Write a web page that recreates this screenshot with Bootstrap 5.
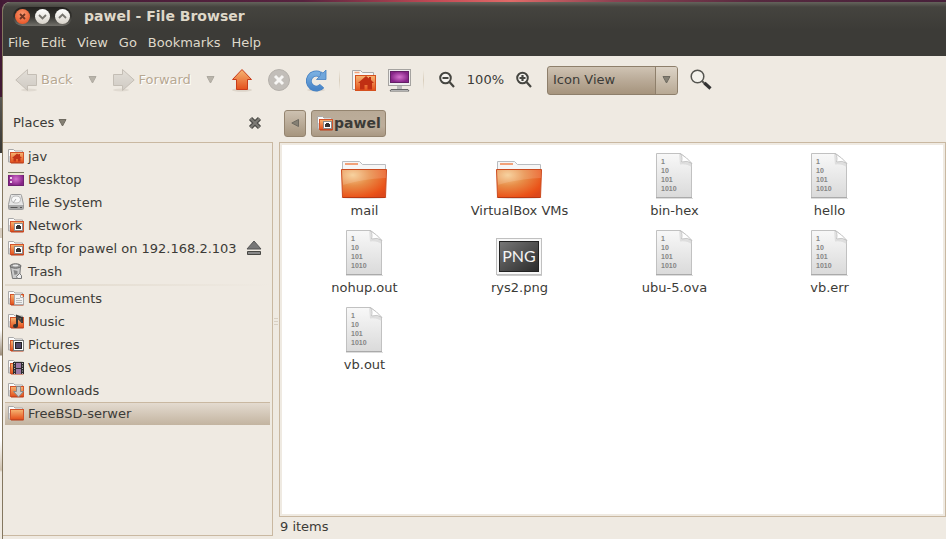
<!DOCTYPE html>
<html lang="en">
<head>
<meta charset="utf-8">
<meta name="viewport" content="width=device-width, initial-scale=1">
<title>pawel - File Browser</title>
<link href="https://cdn.jsdelivr.net/npm/bootstrap@5.3.0/dist/css/bootstrap.min.css" rel="stylesheet">
<style>
:root{--cream:#efeae2;--ink:#3c3b37;--line:#c9b8a1}
body{font:13px/18px "DejaVu Sans",sans-serif;color:var(--ink);background:#411934;overflow:hidden}
button{font:inherit;color:inherit;background:none;border:0;padding:0}
a{color:inherit;text-decoration:none}
svg{display:block;flex:none}
.desk{padding:2px 0 0 2px;background:
 linear-gradient(#411934 0 97px,#5a5853 97px,#393834 153px,#f7f6f3 153px 228px,#d8cfc2 228px 238px,#fff 238px 330px,#9c8e7c 355px,#fff 356px 440px,#cfc2b0 470px,#efeae2 472px) 0 0/2px 100% no-repeat,
 linear-gradient(90deg,#431a36,#57233f 32%,#c34a55 46%,#e06a68 54%,#8d4152 65%,#56293f 80%,#47203a)}
.win{border-left:1px solid #84775f;border-top-left-radius:8px;background:var(--cream);overflow:hidden}
.titlebar{height:28px;padding-left:10px;gap:12px;background:linear-gradient(#65635c,#45443f 5px,#3c3b37);color:#dfd8c9}
.titlebar h1{font-size:14px;line-height:18px;font-weight:bold}
.pill{height:19px;width:59px;border-radius:10px;gap:5px;background:linear-gradient(#23221f,#34332f 50%,#73716b);padding:0 2px}
.orb{width:15px;height:15px;border-radius:50%;background:linear-gradient(#fff,#d8d3ca)}
.orb.shut{background:radial-gradient(circle at 50% 35%,#f99a72,#ea5a2c 75%)}
.menus{height:26px;padding:0 5px;gap:11px;background:#3c3b37;color:#dfd8c9}
.menus a{height:24px;line-height:24px}
.tools{height:48px;padding-left:12px;gap:12px}
.off{color:#b7a892;text-shadow:1px 1px #fff}
.g1{margin-right:3px}.g2{margin-right:4px}
.rule{width:1px;height:20px;background:linear-gradient(transparent,#d8cdbb,transparent)}
.pick{width:131px;height:29px}
.pick select{appearance:none;width:100%;height:100%;font:inherit;color:var(--ink);padding:0 28px 0 5px;border:1px solid #8e7f6b;border-radius:3px;background:linear-gradient(#cfc3b3,#b9aa97 50%,#a6947d)}
.pick span{position:absolute;right:1px;top:1px;bottom:1px;width:22px;border-left:1px solid #8e7f6b;border-radius:0 2px 2px 0;background:linear-gradient(#dcd3c6,#b8a994);pointer-events:none}
.side{width:270px;padding-bottom:3px}
.head{height:38px}
.side .head{padding:0 11px 0 10px}
.path{padding-left:5px;gap:5px}
.frame{border:1px solid var(--line)}
.side .frame{border-left:0;padding:2px}
.place{height:23px;gap:4px;padding-left:3px;color:inherit}
.place svg{margin-bottom:2px}
.place.chosen{background:linear-gradient(#e4dbd0,#c3b4a0);border-top:1px solid var(--line)}
.side hr{margin:1px 0 1px;border:0;height:2px;opacity:1;background:linear-gradient(90deg,#e0d8cb,transparent)}
.split{width:6px}
.grip{width:4px;height:8px;background:repeating-linear-gradient(#d8cfc2 0 1px,transparent 1px 3px)}
.crumb{height:27px;border:1px solid #94846f;border-radius:3px;background:linear-gradient(#cdc1b1,#a6957e)}
.crumb.prev{width:22px}
.crumb.here{background:linear-gradient(#b9aa97,#bdae9b 60%,#a99883);font-size:14px;font-weight:bold;padding:0 4px 0 5px;gap:1px}
.view{padding:2px}
.icons{display:grid;grid-template-columns:repeat(auto-fill,155px);grid-auto-rows:69px;align-content:start;row-gap:8px;padding:6px 0 0 5px;background:#fff}
.doc{gap:3px}
.doc svg{margin-right:2px}
.status{height:19px;margin-bottom:3px;padding-left:1px}
</style>
<script src="https://cdn.jsdelivr.net/npm/bootstrap@5.3.0/dist/js/bootstrap.bundle.min.js"></script>
</head>
<body>
<svg width="0" height="0" class="position-absolute" aria-hidden="true">
<defs>
<linearGradient id="org" x1="0" y1="0" x2="0" y2="1"><stop offset="0" stop-color="#f6b674"/><stop offset="1" stop-color="#e4501b"/></linearGradient>
<radialGradient id="fold" cx=".25" cy=".2" r=".95"><stop offset="0" stop-color="#f6cb90"/><stop offset=".4" stop-color="#e88d48"/><stop offset=".85" stop-color="#ea5218"/><stop offset="1" stop-color="#dd481a"/></radialGradient>
<linearGradient id="gry" x1="0" y1="0" x2="0" y2="1"><stop offset="0" stop-color="#e3dfd8"/><stop offset="1" stop-color="#cfcac3"/></linearGradient>
<linearGradient id="pap" x1="0" y1="0" x2="0" y2="1"><stop offset="0" stop-color="#f8f8f8"/><stop offset="1" stop-color="#dadada"/></linearGradient>
<linearGradient id="drk" x1="0" y1="0" x2="1" y2="1"><stop offset="0" stop-color="#777"/><stop offset="1" stop-color="#292929"/></linearGradient>
<radialGradient id="pur"><stop offset="0" stop-color="#d673cf"/><stop offset="1" stop-color="#862487"/></radialGradient>
<linearGradient id="blu" x1="0" y1="0" x2="0" y2="1"><stop offset="0" stop-color="#78aee0"/><stop offset="1" stop-color="#4a86c8"/></linearGradient>
<symbol id="mini" viewBox="0 0 16 16"><path d="M.5 14V1.500h5L7 3h7.500v5H2v6z" fill="#fcfcfc" stroke="#a9a9a9"/><rect x="2.500" y="4.500" width="13" height="10" fill="url(#org)" stroke="#d3532a"/><path d="M3 15h12.500" stroke="#b83a17"/></symbol>
<symbol id="house" viewBox="0 0 16 16"><use href="#mini"/><path d="M9 5.500L4 10h1.500v3.500h2.500V11h2v2.500h2.500V10H14L12 8.200V6h-1.500v.8z" fill="#c1351a"/></symbol>
<symbol id="net" viewBox="0 0 16 16"><use href="#mini"/><rect x="6.500" y="6.500" width="8" height="7" fill="#fff" stroke="#8c8c8c"/><path d="M8 9h1V8h3v1h1v3H8z" fill="#333"/></symbol>
<symbol id="folder" viewBox="0 0 48 48"><ellipse cx="24" cy="46.500" rx="23" ry="1.500" fill="#ddd"/><path d="M2.500 20V10.500h17l3 3h23V20z" fill="#f6f6f6" stroke="#b9bcc0"/><path d="M5 13h13" stroke="#f2a178" stroke-width="2"/><path d="M1.500 18.500h45l-1 28h-43z" fill="url(#fold)" stroke="#cb4b20"/><path d="M2 19h44v8Q22 28 3 34z" fill="#fff" opacity=".14"/><path d="M3 46.500h42" stroke="#b83813"/></symbol>
<symbol id="binary" viewBox="0 0 48 48"><path d="M6 47.500h37" stroke="#ddd" stroke-width="1"/><path d="M6.500 2.500h24q6 4 11 10v34h-35z" fill="url(#pap)" stroke="#c1c1c1"/><path d="M6 46.500h36" stroke="#aaa"/><path d="M29 2.500q4 3 2 9 6-2 11 1v4q-5-4-12-3z" fill="#ccc" opacity=".5"/><path d="M30 2.500q3 3 1.500 8.500 6-2 10.500 1.500-5-6-12-10z" fill="#fff" stroke="#bbb" stroke-width=".8"/><g font-family="Liberation Sans,sans-serif" font-weight="bold" font-size="7" fill="#858585"><text x="11" y="13">1</text><text x="11" y="22">10</text><text x="11" y="31">101</text><text x="11" y="40">1010</text></g></symbol>
<symbol id="caret" viewBox="0 0 9 8"><path d="M1 .5h7L4.500 7z" fill="#858074" stroke="#6e6a60"/></symbol>
</defs></svg>
<div class="desk vh-100 d-flex flex-column">
<main class="win flex-grow-1 d-flex flex-column">
<header class="titlebar d-flex align-items-center">
<div class="pill d-flex align-items-center">
<button class="orb shut" aria-label="Close"><svg width="15" height="15"><path d="M5 5l5 5m0-5l-5 5" stroke="#713522" stroke-width="1.800"/></svg></button>
<button class="orb" aria-label="Minimize"><svg width="15" height="15"><path d="M4 6l3.500 3.500L11 6" fill="none" stroke="#77756f" stroke-width="1.800"/></svg></button>
<button class="orb" aria-label="Maximize"><svg width="15" height="15"><path d="M4 9l3.500-3.500L11 9" fill="none" stroke="#77756f" stroke-width="1.800"/></svg></button>
</div>
<h1 class="m-0">pawel - File Browser</h1>
</header>
<nav class="menus d-flex align-items-center" aria-label="Menu">
<a href="#">File</a><a href="#">Edit</a><a href="#">View</a><a href="#">Go</a><a href="#">Bookmarks</a><a href="#">Help</a>
</nav>
<div class="tools d-flex align-items-center flex-shrink-0" role="toolbar">
<button class="off g1 d-flex align-items-center gap-1" disabled><svg width="22" height="24"><ellipse cx="14" cy="22" rx="8" ry="1.500" fill="#e0dad1"/><path d="M.8 12L12.500 1.500v5h9v11h-9v5z" fill="url(#gry)" stroke="#c4beb5"/></svg>Back</button>
<button class="g2 opacity-50" aria-label="Back history" disabled><svg width="9" height="8"><use href="#caret"/></svg></button>
<button class="off g1 d-flex align-items-center gap-1" disabled><svg width="22" height="24"><ellipse cx="8" cy="22" rx="8" ry="1.500" fill="#e0dad1"/><path d="M21.200 12L9.500 1.500v5h-9v11h9v5z" fill="url(#gry)" stroke="#c4beb5"/></svg>Forward</button>
<button class="g2 opacity-50" aria-label="Forward history" disabled><svg width="9" height="8"><use href="#caret"/></svg></button>
<button class="g1" aria-label="Up"><svg width="22" height="24"><ellipse cx="11" cy="22" rx="10" ry="1.800" fill="#ddd5ca"/><path d="M11 1.500l9.500 10h-4v10h-11v-10h-4z" fill="url(#org)" stroke="#c93b19"/></svg></button>
<button class="g1" aria-label="Stop" disabled><svg width="22" height="24"><circle cx="11" cy="12" r="10.500" fill="#c2beb9" stroke="#b4b0aa"/><path d="M7 8l8 8m0-8l-8 8" stroke="#f7f6f4" stroke-width="3"/></svg></button>
<button aria-label="Reload"><svg width="22" height="24"><ellipse cx="11" cy="22" rx="9" ry="1.500" fill="#ddd5ca"/><path d="M15 6.500A7.500 7.500 0 1 0 17 18" fill="none" stroke="#4580c2" stroke-width="6"/><path d="M15 6.500A7.500 7.500 0 1 0 17 18" fill="none" stroke="url(#blu)" stroke-width="4.500"/><path d="M21 2v9.500h-9.500l3.500-3.500 1-4 2 1z" fill="#70a6db" stroke="#4580c2" stroke-width=".8"/></svg></button>
<span class="rule"></span>
<button aria-label="Home"><svg width="24" height="24"><path d="M.5 21.500v-19h8l2 2h11v6h-18v11z" fill="#f6f6f5" stroke="#aaa"/><path d="M2.500 4.500h5" stroke="#f2a178" stroke-width="1.500"/><rect x="3.500" y="7.500" width="20" height="15" fill="url(#org)" stroke="#d5501e"/><path d="M14 8l-8 7h2v6.500h4.500V17h3v4.500H20V15h2l-3-3V9h-2v1.500z" fill="#c02f13"/></svg></button>
<button aria-label="Computer"><svg width="23" height="24"><path d="M9 18h5v3H9z" fill="#bbb"/><rect x=".5" y="1.500" width="22" height="16" fill="#eee" stroke="#a5a3a0"/><rect x="2.500" y="3.500" width="18" height="11" fill="url(#pur)" stroke="#641f66"/><path d="M3 21.500h17l1 1.500H2z" fill="#fff" stroke="#666"/></svg></button>
<span class="rule g1"></span>
<button aria-label="Zoom out"><svg width="16" height="18"><circle cx="6.500" cy="7" r="5.300" fill="#f6f4f0" stroke="#464641" stroke-width="2"/><path d="M3.500 7h6M10.500 11l4.500 5" stroke="#464641" stroke-width="2.200"/></svg></button>
<span>100%</span>
<button class="g1" aria-label="Zoom in"><svg width="16" height="18"><circle cx="6.500" cy="7" r="5.300" fill="#f6f4f0" stroke="#464641" stroke-width="2"/><path d="M3.500 7h6m-3-3v6M10.500 11l4.500 5" stroke="#464641" stroke-width="2.200"/></svg></button>
<div class="pick position-relative"><select aria-label="View as"><option>Icon View</option><option>List View</option><option>Compact View</option></select><span class="d-flex align-items-center justify-content-center"><svg width="9" height="8"><use href="#caret"/></svg></span></div>
<button aria-label="Search"><svg width="22" height="22"><circle cx="7.500" cy="7.500" r="6.300" fill="#f4f2ec" stroke="#555550" stroke-width="1.500"/><path d="M12 12l4 4" stroke="#55544f" stroke-width="2"/><path d="M14.500 14l6 5.500" stroke="#333" stroke-width="3.200"/></svg></button>
</div>
<div class="d-flex flex-grow-1">
<aside class="side d-flex flex-column flex-shrink-0">
<div class="head d-flex align-items-center justify-content-between">
<button class="d-flex align-items-center gap-1">Places<svg width="9" height="8"><use href="#caret"/></svg></button>
<button aria-label="Close side pane"><svg width="14" height="14"><path d="M2.500 2.500l9 9m0-9l-9 9" stroke="#4c4b47" stroke-width="4.500"/><path d="M2.500 2.500l9 9m0-9l-9 9" stroke="#7d7b76" stroke-width="2"/></svg></button>
</div>
<nav class="frame flex-grow-1" aria-label="Places">
<a class="place d-flex align-items-center" href="#"><svg width="16" height="16"><use href="#house"/></svg>jav</a>
<a class="place d-flex align-items-center" href="#"><svg width="16" height="16"><rect x=".5" y="1.500" width="15" height="13" fill="url(#pur)" stroke="#6d2370"/><path d="M0 1.500h16" stroke="#74785f"/><path d="M0 3h16" stroke="#e6e6cf" stroke-width="2"/><path d="M2 6h2v2H2zm0 4h2v2H2z" fill="#f1d7ef"/></svg>Desktop</a>
<a class="place d-flex align-items-center" href="#"><svg width="16" height="16"><path d="M2.500 1.500q0-1 1-1h9q1 0 1 1l2 9v4q0 1-1 1h-13q-1 0-1-1v-4z" fill="#e5e5e5" stroke="#999"/><ellipse cx="8" cy="5.500" rx="4.500" ry="3.500" fill="#f8f8f8" stroke="#bbb"/><path d="M8 5l-3 4" stroke="#aaa"/><path d="M1 11h14v4H1z" fill="#aaa"/><path d="M2.500 13.500h7M12 13.500h2" stroke="#555"/></svg>File System</a>
<a class="place d-flex align-items-center" href="#"><svg width="16" height="16"><use href="#net"/></svg>Network</a>
<div class="place d-flex align-items-center"><a class="d-flex align-items-center gap-1 flex-grow-1" href="#"><svg width="16" height="16"><use href="#net"/></svg>sftp for pawel on 192.168.2.103</a><button class="me-2" aria-label="Eject"><svg width="16" height="16"><path d="M8 1l7 8H1z" fill="#777" stroke="#555"/><path d="M1.500 11.500h13v3h-13z" fill="#888" stroke="#484844"/></svg></button></div>
<a class="place d-flex align-items-center" href="#"><svg width="16" height="16"><path d="M2.500 3.500h10l-1 12h-7z" fill="#ccc" stroke="#777"/><ellipse cx="7.500" cy="3" rx="5.500" ry="2.200" fill="#999" stroke="#666"/><ellipse cx="7.500" cy="2.500" rx="3" ry="1" fill="#e8e8e8"/><path d="M5.500 7l4 1v3l-3 1z" fill="#888"/><path d="M8.500 13.500l3-3 2 2v3h-4z" fill="#eee" stroke="#777"/></svg>Trash</a>
<hr>
<a class="place d-flex align-items-center" href="#"><svg width="16" height="16"><use href="#mini"/><path d="M6.500 4.500h6l3 3v7h-9z" fill="#f1f1f1" stroke="#aaa"/><path d="M8 8.500h4m-4 2h6m-6 2h6" stroke="#bbb"/><path d="M12.500 4.500v3h3" fill="#fff" stroke="#aaa"/></svg>Documents</a>
<a class="place d-flex align-items-center" href="#"><svg width="16" height="16"><use href="#mini"/><path d="M9 13V3l5 2v5" fill="none" stroke="#333" stroke-width="2"/><path d="M9 4l5 5" stroke="#444" stroke-width="2"/><ellipse cx="7.500" cy="13" rx="2.500" ry="2" fill="#333"/></svg>Music</a>
<a class="place d-flex align-items-center" href="#"><svg width="16" height="16"><use href="#mini"/><rect x="5.500" y="4.500" width="10" height="10" fill="#fff" stroke="#777"/><rect x="7.500" y="6.500" width="6" height="6" fill="#514868" stroke="#222"/></svg>Pictures</a>
<a class="place d-flex align-items-center" href="#"><svg width="16" height="16"><use href="#mini"/><rect x="5" y="3" width="11" height="12" fill="#2c2a2d"/><path d="M8 4h5v5H8zm0 6h5v5H8z" fill="#9c78a5"/><path d="M6.500 4v11m8-11v11" stroke="#bbb" stroke-dasharray="1 1.500"/></svg>Videos</a>
<a class="place d-flex align-items-center" href="#"><svg width="16" height="16"><use href="#mini"/><path d="M8.500 4.500h4v5h3l-5 5.500-5-5.500h3z" fill="#ccc" stroke="#888"/></svg>Downloads</a>
<a class="place chosen d-flex align-items-center" href="#" aria-current="page"><svg width="16" height="16"><use href="#mini"/></svg>FreeBSD-serwer</a>
</nav>
</aside>
<div class="split d-flex align-items-center justify-content-center flex-shrink-0"><span class="grip"></span></div>
<section class="d-flex flex-column flex-grow-1">
<div class="head path d-flex align-items-center">
<button class="crumb prev d-flex align-items-center justify-content-center" aria-label="Previous folders"><svg width="8" height="8"><path d="M7.500.5v7L.8 4z" fill="#858074" stroke="#6e6a60"/></svg></button>
<button class="crumb here d-flex align-items-center"><svg width="16" height="16"><use href="#net"/></svg>pawel</button>
</div>
<div class="frame view flex-grow-1 d-flex">
<div class="icons flex-grow-1">
<a class="doc d-flex flex-column align-items-center" href="#"><svg width="48" height="48"><use href="#folder"/></svg>mail</a>
<a class="doc d-flex flex-column align-items-center" href="#"><svg width="48" height="48"><use href="#folder"/></svg>VirtualBox VMs</a>
<a class="doc d-flex flex-column align-items-center" href="#"><svg width="48" height="48"><use href="#binary"/></svg>bin-hex</a>
<a class="doc d-flex flex-column align-items-center" href="#"><svg width="48" height="48"><use href="#binary"/></svg>hello</a>
<a class="doc d-flex flex-column align-items-center" href="#"><svg width="48" height="48"><use href="#binary"/></svg>nohup.out</a>
<a class="doc d-flex flex-column align-items-center" href="#"><svg width="48" height="48"><path d="M2 47.500h45" stroke="#ccc"/><rect x="1.500" y="10.500" width="45" height="36" fill="#f7f7f7" stroke="#c0c0c0"/><rect x="4.500" y="13.500" width="39" height="30" fill="url(#drk)" stroke="#222"/><text x="24" y="34" text-anchor="middle" font-family="Lato,sans-serif" font-size="16" fill="#f4f4f4">PNG</text></svg>rys2.png</a>
<a class="doc d-flex flex-column align-items-center" href="#"><svg width="48" height="48"><use href="#binary"/></svg>ubu-5.ova</a>
<a class="doc d-flex flex-column align-items-center" href="#"><svg width="48" height="48"><use href="#binary"/></svg>vb.err</a>
<a class="doc d-flex flex-column align-items-center" href="#"><svg width="48" height="48"><use href="#binary"/></svg>vb.out</a>
</div>
</div>
<footer class="status d-flex align-items-center">9 items</footer>
</section>
</div>
</main>
</div>
</body>
</html>
